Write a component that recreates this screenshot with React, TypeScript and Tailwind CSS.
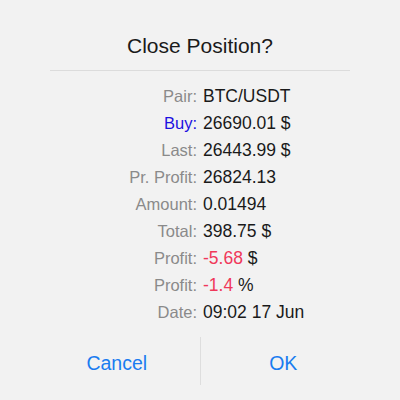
const rows: { label: string; value: string; unit?: string; labelClass?: string; valueClass?: string }[] = [
  { label: "Pair:", value: "BTC/USDT" },
  { label: "Buy:", value: "26690.01 $", labelClass: "text-[#1c10e0]" },
  { label: "Last:", value: "26443.99 $" },
  { label: "Pr. Profit:", value: "26824.13" },
  { label: "Amount:", value: "0.01494" },
  { label: "Total:", value: "398.75 $" },
  { label: "Profit:", value: "-5.68", unit: "$", valueClass: "text-[#f0385a]" },
  { label: "Profit:", value: "-1.4", unit: "%", valueClass: "text-[#f0385a]" },
  { label: "Date:", value: "09:02 17 Jun" },
]

export default function App() {
  return (
    <div className="w-[400px] h-[400px] bg-[#f2f2f2] flex flex-col font-['Liberation_Sans',sans-serif]">
      <div className="pt-[33px] pb-[11px] text-center text-[21px] leading-[26px] text-[#1a1a1a]">Close Position?</div>
      <div className="mx-[50px] h-px bg-[#dcdcdc]" />
      <div className="flex flex-col pt-[12px]">
        {rows.map((r, i) => (
          <div key={i} className="flex h-[27px] items-center">
            <div className={"w-[197px] text-right text-[16.5px] " + (r.labelClass ?? "text-[#8a8a8a]")}>{r.label}</div>
            <div className="pl-[6px] text-[17.5px] text-[#1a1a1a]">
              <span className={r.valueClass}>{r.value}</span>
              {r.unit && <span> {r.unit}</span>}
            </div>
          </div>
        ))}
      </div>
      <div className="flex mt-auto mb-[15px] h-[48px] px-[34px]">
        <div className="flex-1 flex items-center justify-center pt-[6px] text-[19.5px] text-[#1a7cf0]">Cancel</div>
        <div className="w-px bg-[#dedede]" />
        <div className="flex-1 flex items-center justify-center pt-[6px] text-[19.5px] text-[#1a7cf0]">OK</div>
      </div>
    </div>
  )
}
